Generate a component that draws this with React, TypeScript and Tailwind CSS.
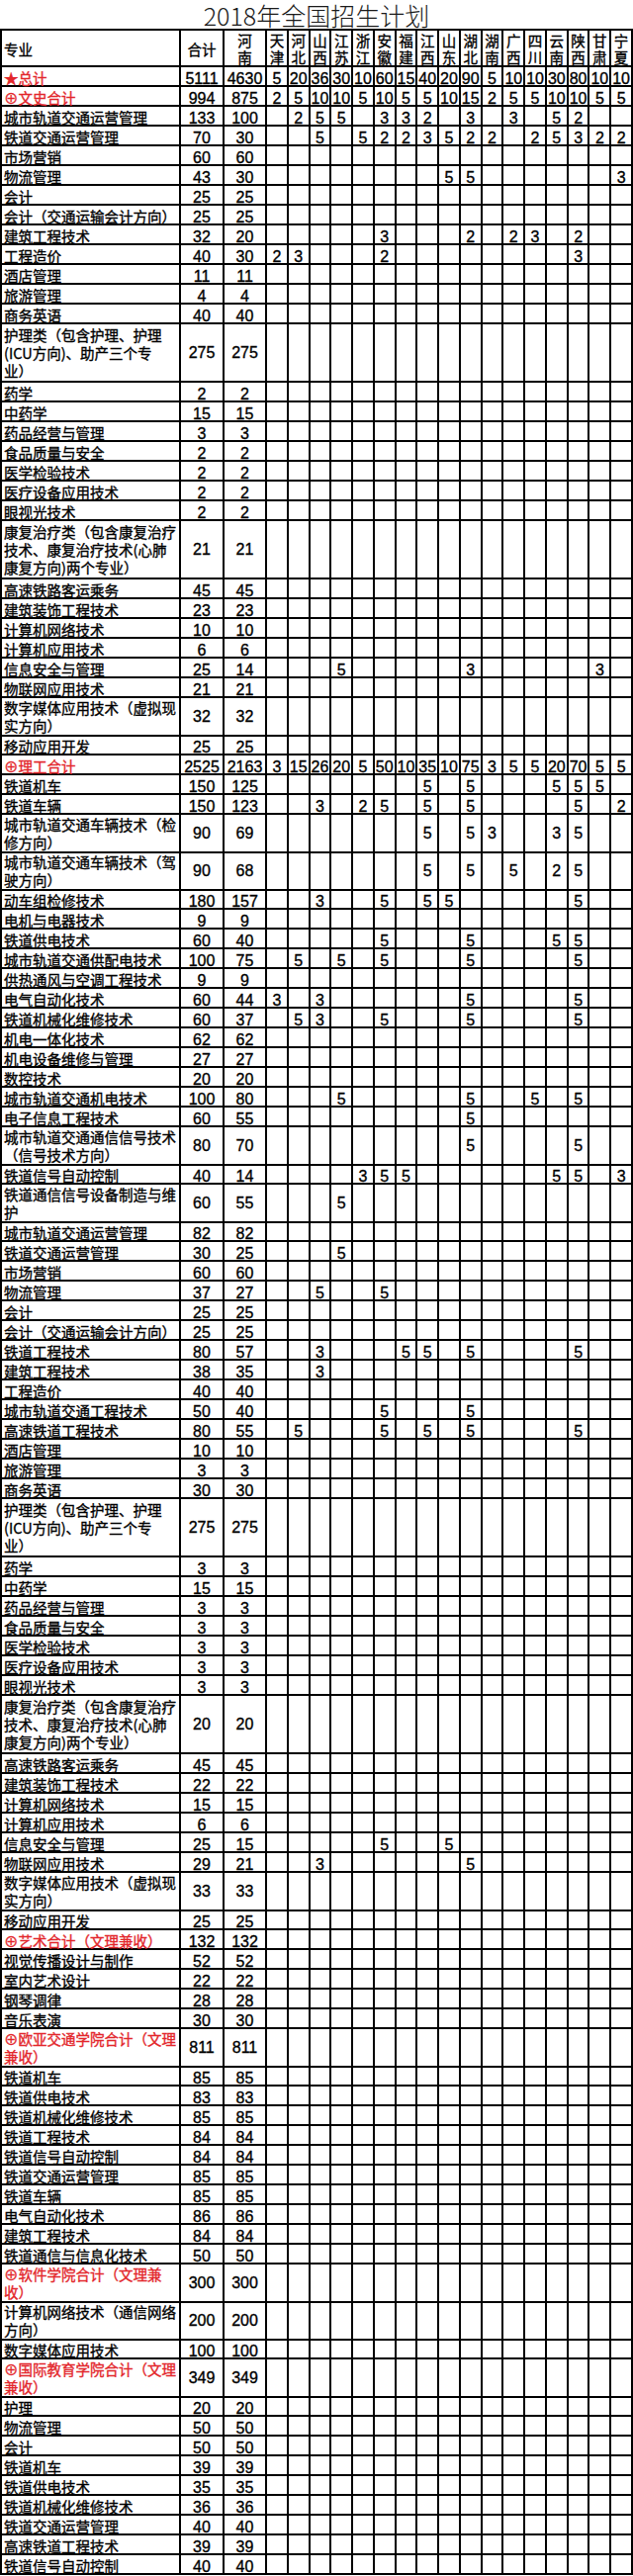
type Row = {
  name: string[];
  total: number;
  henan: number;
  cells: (number | null)[];
  red: boolean;
};

const PROVINCES = ['天津', '河北', '山西', '江苏', '浙江', '安徽', '福建', '江西', '山东', '湖北', '湖南', '广西', '四川', '云南', '陕西', '甘肃', '宁夏'];

// p: either a full list of 17 values or a sparse map of province index -> value
function row(name: string, total: number, henan: number, p?: Record<number, number> | number[], red = false): Row {
  const cells: (number | null)[] = Array(17).fill(null);
  if (Array.isArray(p)) p.forEach((v, i) => (cells[i] = v));
  else if (p) Object.entries(p).forEach(([k, v]) => (cells[Number(k)] = v));
  return { name: name.split('|'), total, henan, cells, red };
}

const NURSING = '护理类（包含护理、护理|(ICU方向)、助产三个专|业）';
const REHAB = '康复治疗类（包含康复治疗|技术、康复治疗技术(心肺|康复方向)两个专业）';

const ROWS: Row[] = [
  row('★总计', 5111, 4630, [5, 20, 36, 30, 10, 60, 15, 40, 20, 90, 5, 10, 10, 30, 80, 10, 10], true),
  row('⊕文史合计', 994, 875, [2, 5, 10, 10, 5, 10, 5, 5, 10, 15, 2, 5, 5, 10, 10, 5, 5], true),
  row('城市轨道交通运营管理', 133, 100, { 1: 2, 2: 5, 3: 5, 5: 3, 6: 3, 7: 2, 9: 3, 11: 3, 13: 5, 14: 2 }),
  row('铁道交通运营管理', 70, 30, { 2: 5, 4: 5, 5: 2, 6: 2, 7: 3, 8: 5, 9: 2, 10: 2, 12: 2, 13: 5, 14: 3, 15: 2, 16: 2 }),
  row('市场营销', 60, 60),
  row('物流管理', 43, 30, { 8: 5, 9: 5, 16: 3 }),
  row('会计', 25, 25),
  row('会计（交通运输会计方向）', 25, 25),
  row('建筑工程技术', 32, 20, { 5: 3, 9: 2, 11: 2, 12: 3, 14: 2 }),
  row('工程造价', 40, 30, { 0: 2, 1: 3, 5: 2, 14: 3 }),
  row('酒店管理', 11, 11),
  row('旅游管理', 4, 4),
  row('商务英语', 40, 40),
  row(NURSING, 275, 275),
  row('药学', 2, 2),
  row('中药学', 15, 15),
  row('药品经营与管理', 3, 3),
  row('食品质量与安全', 2, 2),
  row('医学检验技术', 2, 2),
  row('医疗设备应用技术', 2, 2),
  row('眼视光技术', 2, 2),
  row(REHAB, 21, 21),
  row('高速铁路客运乘务', 45, 45),
  row('建筑装饰工程技术', 23, 23),
  row('计算机网络技术', 10, 10),
  row('计算机应用技术', 6, 6),
  row('信息安全与管理', 25, 14, { 3: 5, 9: 3, 15: 3 }),
  row('物联网应用技术', 21, 21),
  row('数字媒体应用技术（虚拟现|实方向）', 32, 32),
  row('移动应用开发', 25, 25),
  row('⊕理工合计', 2525, 2163, [3, 15, 26, 20, 5, 50, 10, 35, 10, 75, 3, 5, 5, 20, 70, 5, 5], true),
  row('铁道机车', 150, 125, { 7: 5, 9: 5, 13: 5, 14: 5, 15: 5 }),
  row('铁道车辆', 150, 123, { 2: 3, 4: 2, 5: 5, 7: 5, 9: 5, 14: 5, 16: 2 }),
  row('城市轨道交通车辆技术（检|修方向）', 90, 69, { 7: 5, 9: 5, 10: 3, 13: 3, 14: 5 }),
  row('城市轨道交通车辆技术（驾|驶方向）', 90, 68, { 7: 5, 9: 5, 11: 5, 13: 2, 14: 5 }),
  row('动车组检修技术', 180, 157, { 2: 3, 5: 5, 7: 5, 8: 5, 14: 5 }),
  row('电机与电器技术', 9, 9),
  row('铁道供电技术', 60, 40, { 5: 5, 9: 5, 13: 5, 14: 5 }),
  row('城市轨道交通供配电技术', 100, 75, { 1: 5, 3: 5, 5: 5, 9: 5, 14: 5 }),
  row('供热通风与空调工程技术', 9, 9),
  row('电气自动化技术', 60, 44, { 0: 3, 2: 3, 9: 5, 14: 5 }),
  row('铁道机械化维修技术', 60, 37, { 1: 5, 2: 3, 5: 5, 9: 5, 14: 5 }),
  row('机电一体化技术', 62, 62),
  row('机电设备维修与管理', 27, 27),
  row('数控技术', 20, 20),
  row('城市轨道交通机电技术', 100, 80, { 3: 5, 9: 5, 12: 5, 14: 5 }),
  row('电子信息工程技术', 60, 55, { 9: 5 }),
  row('城市轨道交通通信信号技术|（信号技术方向）', 80, 70, { 9: 5, 14: 5 }),
  row('铁道信号自动控制', 40, 14, { 4: 3, 5: 5, 6: 5, 13: 5, 14: 5, 16: 3 }),
  row('铁道通信信号设备制造与维|护', 60, 55, { 3: 5 }),
  row('城市轨道交通运营管理', 82, 82),
  row('铁道交通运营管理', 30, 25, { 3: 5 }),
  row('市场营销', 60, 60),
  row('物流管理', 37, 27, { 2: 5, 5: 5 }),
  row('会计', 25, 25),
  row('会计（交通运输会计方向）', 25, 25),
  row('铁道工程技术', 80, 57, { 2: 3, 6: 5, 7: 5, 9: 5, 14: 5 }),
  row('建筑工程技术', 38, 35, { 2: 3 }),
  row('工程造价', 40, 40),
  row('城市轨道交通工程技术', 50, 40, { 5: 5, 9: 5 }),
  row('高速铁道工程技术', 80, 55, { 1: 5, 5: 5, 7: 5, 9: 5, 14: 5 }),
  row('酒店管理', 10, 10),
  row('旅游管理', 3, 3),
  row('商务英语', 30, 30),
  row(NURSING, 275, 275),
  row('药学', 3, 3),
  row('中药学', 15, 15),
  row('药品经营与管理', 3, 3),
  row('食品质量与安全', 3, 3),
  row('医学检验技术', 3, 3),
  row('医疗设备应用技术', 3, 3),
  row('眼视光技术', 3, 3),
  row(REHAB, 20, 20),
  row('高速铁路客运乘务', 45, 45),
  row('建筑装饰工程技术', 22, 22),
  row('计算机网络技术', 15, 15),
  row('计算机应用技术', 6, 6),
  row('信息安全与管理', 25, 15, { 5: 5, 8: 5 }),
  row('物联网应用技术', 29, 21, { 2: 3, 9: 5 }),
  row('数字媒体应用技术（虚拟现|实方向）', 33, 33),
  row('移动应用开发', 25, 25),
  row('⊕艺术合计（文理兼收）', 132, 132, undefined, true),
  row('视觉传播设计与制作', 52, 52),
  row('室内艺术设计', 22, 22),
  row('钢琴调律', 28, 28),
  row('音乐表演', 30, 30),
  row('⊕欧亚交通学院合计（文理|兼收）', 811, 811, undefined, true),
  row('铁道机车', 85, 85),
  row('铁道供电技术', 83, 83),
  row('铁道机械化维修技术', 85, 85),
  row('铁道工程技术', 84, 84),
  row('铁道信号自动控制', 84, 84),
  row('铁道交通运营管理', 85, 85),
  row('铁道车辆', 85, 85),
  row('电气自动化技术', 86, 86),
  row('建筑工程技术', 84, 84),
  row('铁道通信与信息化技术', 50, 50),
  row('⊕软件学院合计（文理兼|收）', 300, 300, undefined, true),
  row('计算机网络技术（通信网络|方向）', 200, 200),
  row('数字媒体应用技术', 100, 100),
  row('⊕国际教育学院合计（文理|兼收）', 349, 349, undefined, true),
  row('护理', 20, 20),
  row('物流管理', 50, 50),
  row('会计', 50, 50),
  row('铁道机车', 39, 39),
  row('铁道供电技术', 35, 35),
  row('铁道机械化维修技术', 36, 36),
  row('铁道交通运营管理', 40, 40),
  row('高速铁道工程技术', 39, 39),
  row('铁道信号自动控制', 40, 40),
];

const GRID = 'grid grid-cols-[181px_44px_43px_repeat(17,minmax(0,1fr))]';
const HEIGHTS: Record<number, string> = { 1: 'h-[20px]', 2: 'h-[38px]', 3: 'h-[59px]' };
const CELL = 'border-r-2 border-b-2 border-black flex min-w-0';
const NUM = "font-['Liberation_Sans_Narrow','Liberation_Sans',sans-serif] text-[16px] text-black [-webkit-text-stroke:0.35px_black]";

function NumCell({ value, multi }: { value: number | null; multi: boolean }) {
  return (
    <div className={`${CELL} justify-center ${multi ? 'items-center leading-[16px]' : 'items-end leading-[13px]'}`}>
      {value !== null && <span className={NUM}>{value}</span>}
    </div>
  );
}

function TableRow({ data }: { data: Row }) {
  const multi = data.name.length > 1;
  return (
    <div className={`${GRID} ${HEIGHTS[data.name.length]}`}>
      <div
        className={`${CELL} pl-[2px] whitespace-nowrap text-[14.5px] ${
          multi ? 'items-center leading-[18px] pt-[1px]' : 'items-end leading-[15px]'
        } ${data.red ? 'text-[#e3262b] [-webkit-text-stroke:0.35px_#e3262b]' : 'text-black [-webkit-text-stroke:0.35px_black]'}`}
      >
        <div>
          {data.name.map((line, i) => (
            <div key={i}>{line}</div>
          ))}
        </div>
      </div>
      <NumCell value={data.total} multi={multi} />
      <NumCell value={data.henan} multi={multi} />
      {data.cells.map((v, i) => (
        <NumCell key={i} value={v} multi={multi} />
      ))}
    </div>
  );
}

export default function App() {
  return (
    <div className="w-[640px] bg-white font-['Noto_Sans_CJK_SC',sans-serif]">
      {/* Title */}
      <div className="h-[29px] flex items-end justify-center pb-[1px] text-[25px] leading-none font-light text-[#1a1a1a]">
        2018年全国招生计划
      </div>

      <div className="border-t-2 border-l-2 border-black">
        {/* Header */}
        <div className={`${GRID} h-[37px] text-[14.5px] text-black [-webkit-text-stroke:0.35px_black]`}>
          <div className={`${CELL} items-center pl-[2px] pt-[3px]`}>专业</div>
          <div className={`${CELL} items-center justify-center pt-[3px]`}>合计</div>
          <div className={`${CELL} flex-col items-center justify-center leading-[17px]`}>
            <span>河</span>
            <span>南</span>
          </div>
          {PROVINCES.map((p) => (
            <div key={p} className={`${CELL} flex-col items-center justify-center leading-[17px]`}>
              <span>{p[0]}</span>
              <span>{p[1]}</span>
            </div>
          ))}
        </div>

        {ROWS.map((r, i) => (
          <TableRow key={i} data={r} />
        ))}
      </div>
    </div>
  );
}
